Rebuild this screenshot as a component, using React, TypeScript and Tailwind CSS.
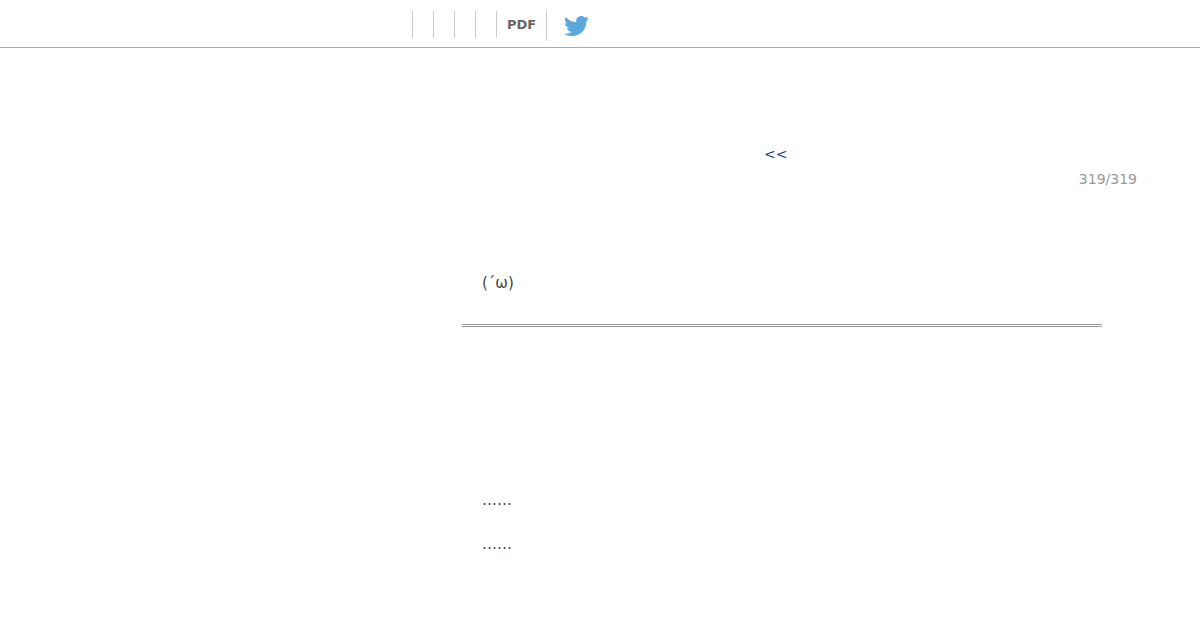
import { FaTwitter } from 'react-icons/fa';

const emptyItems = [1, 2, 3, 4];

function Header() {
  return (
    <header className="flex h-[48px] items-start border-b border-[#aaa] pt-[11px] pl-[412px]">
      {/* Menu */}
      <ul className="flex">
        {emptyItems.map((item) => (
          <li key={item} className="h-[27px] w-[21px] border-l border-[#ccc]" />
        ))}
        <li className="h-[27px] border-l border-[#ccc] px-[10px] text-[13px] leading-[27px] font-bold text-[#666]">
          PDF
        </li>
      </ul>
      {/* Share */}
      <div className="h-[30px] border-l border-[#ccc] pt-[5px] pl-[17px]">
        <FaTwitter
          viewBox="0 48 512 416"
          preserveAspectRatio="none"
          className="h-[20px] w-[25px] text-[#5ba8dc]"
        />
      </div>
    </header>
  );
}

export default function App() {
  return (
    <div className="h-[630px] overflow-hidden bg-white font-['DejaVu_Sans',sans-serif] text-[#444]">
      <Header />
      <main className="flex flex-col">
        <nav className="pt-[96px] pl-[764px] text-[14px] leading-[20px] text-[#1a3f94]">&lt;&lt;</nav>
        <div className="pt-[5px] pr-[63px] text-right text-[14px] leading-[20px] text-[#999]">319/319</div>

        {/* Novel text */}
        <section className="ml-[462px] w-[640px] text-[15px] leading-[22px]">
          <p className="h-[138px] border-b-3 border-double border-[#999] px-5 pt-[83px]">(´ω)</p>
          <p className="px-5 pt-[162px]">……</p>
          <p className="px-5 pt-[22px]">……</p>
        </section>
      </main>
    </div>
  );
}
